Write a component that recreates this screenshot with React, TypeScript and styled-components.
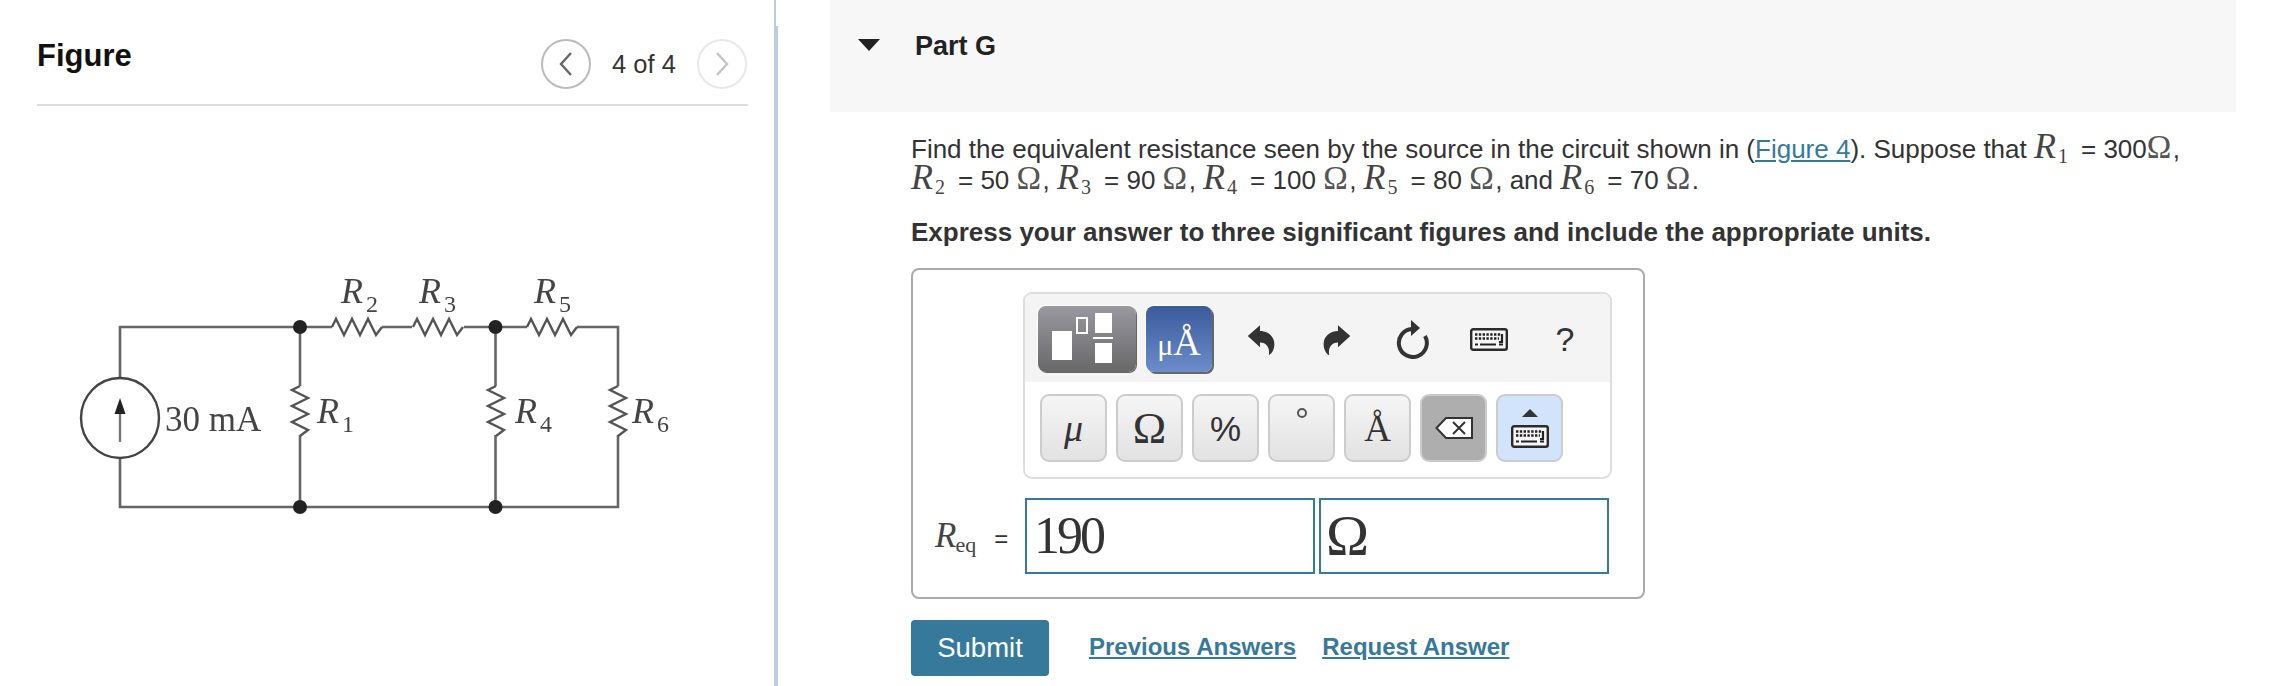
import React, { ReactElement } from 'react'
import styled, { createGlobalStyle } from 'styled-components'

const SANS = '"Liberation Sans", Arial, sans-serif'
const SERIF = '"Liberation Serif", "Times New Roman", serif'
const TEAL = '#37799b'
const INK = '#333'

const GlobalStyle = createGlobalStyle`
  html, body {
    margin: 0;
    padding: 0;
    background: #fff;
    font-family: ${SANS};
    color: ${INK};
  }
`

const Page = styled.div`
  display: flex;
  width: 2292px;
  height: 686px;
  overflow: hidden;
`

const FigurePanel = styled.aside`
  position: relative;
  box-sizing: border-box;
  flex: none;
  width: 778px;
  padding: 0 26px 0 37px;
  border-right: 4px solid #bccddd;
  &::before {
    content: '';
    position: absolute;
    top: 0;
    right: -4px;
    width: 2px;
    height: 26px;
    background: #fff;
  }
`

const FigureHeader = styled.header`
  display: flex;
  align-items: flex-start;
  justify-content: space-between;
  height: 104px;
  border-bottom: 2px solid #ddd;
`

const FigureTitle = styled.h2`
  margin: 37px 0 0;
  font-size: 31px;
  line-height: 38px;
  font-weight: 700;
  color: #111;
`

const Pager = styled.div`
  display: flex;
  align-items: center;
  margin: 39px 1px 0 0;
`

const PagerText = styled.span`
  width: 106px;
  text-align: center;
  font-size: 25.5px;
  line-height: 50px;
  color: ${INK};
`

const PagerButton = styled.button<{ $off?: boolean }>`
  display: flex;
  align-items: center;
  justify-content: center;
  box-sizing: border-box;
  width: 50px;
  height: 50px;
  padding: 0;
  background: #fff;
  border-radius: 50%;
  border: 2px solid ${(p) => (p.$off ? '#e8e8e8' : '#bbb')};
  color: ${(p) => (p.$off ? '#c4c4c4' : '#666')};
`

const CircuitSvg = styled.svg`
  display: block;
  width: 711px;
  height: 280px;
  margin-top: 154px;
  filter: blur(0.45px);
`

const QuestionPanel = styled.main`
  flex: 1;
  padding-left: 52px;
`

const PartHeader = styled.header`
  display: flex;
  align-items: flex-start;
  box-sizing: border-box;
  width: 1406px;
  height: 112px;
  padding: 30px 0 0 28px;
  background: #f7f7f7;
`

const Caret = styled.span`
  width: 0;
  height: 0;
  margin: 9px 35px 0 0;
  border-left: 11px solid transparent;
  border-right: 11px solid transparent;
  border-top: 12px solid #222;
`

const PartTitle = styled.h3`
  margin: 0;
  font-size: 27px;
  line-height: 32px;
  font-weight: 700;
  color: #222;
`

const Body = styled.div`
  padding-left: 81px;
`

const Prompt = styled.p`
  margin: 22px 0 0;
  width: 1290px;
  font-size: 26px;
  line-height: 31px;
  color: ${INK};
  white-space: nowrap;
`

const FigureLink = styled.a`
  color: ${TEAL};
  text-decoration: underline;
`

const Instruction = styled.p`
  margin: 21px 0 0;
  font-size: 26px;
  line-height: 31px;
  font-weight: 700;
  color: ${INK};
`

const MathVar = styled.span`
  font-family: ${SERIF};
  font-style: italic;
  font-size: 36px;
  line-height: 0;
  letter-spacing: 2px;
  color: #444;
`

const MathSub = styled.sub`
  font-family: ${SERIF};
  font-size: 20px;
  line-height: 0;
  vertical-align: -5px;
  margin-right: 13px;
  color: #444;
`

const MathOhm = styled.span`
  font-family: ${SERIF};
  font-size: 33px;
  line-height: 0;
  margin-right: 1.5px;
  color: #555;
`

const AnswerBox = styled.div`
  box-sizing: border-box;
  width: 734px;
  height: 331px;
  margin-top: 20px;
  padding-top: 22px;
  border: 2px solid #aaa;
  border-radius: 8px;
`

const Toolbar = styled.div`
  box-sizing: border-box;
  width: 589px;
  height: 187px;
  margin-left: 110px;
  border: 2px solid #ddd;
  border-radius: 9px;
  overflow: hidden;
`

const TemplateRow = styled.div`
  display: flex;
  align-items: flex-start;
  box-sizing: border-box;
  height: 88px;
  padding: 12px 0 0 13px;
  background: #f4f4f4;
`

const GrayTab = styled.div`
  display: flex;
  align-items: center;
  justify-content: center;
  box-sizing: border-box;
  width: 98px;
  height: 66px;
  border-radius: 8px;
  background: linear-gradient(#9a98a0, #686868);
  box-shadow: -1px -1px 0 #fff, 1px 1px 0 #666;
`

const BlueTab = styled.div`
  display: flex;
  align-items: baseline;
  justify-content: center;
  box-sizing: border-box;
  width: 66px;
  height: 66px;
  margin-left: 10px;
  border-radius: 8px;
  background: linear-gradient(#3b5a9b, #6c8ccb);
  box-shadow: -1px -1px 0 #fff, 2px 2px 0 #666;
  font-family: ${SERIF};
  font-size: 38px;
  line-height: 72px;
  color: #fff;
`

const MicroGlyph = styled.span`
  font-size: 30px;
`

const ToolSlots = styled.div`
  display: flex;
  align-items: center;
  height: 66px;
  margin-left: 11px;
`

const ToolSlot = styled.div<{ $mirror?: boolean }>`
  display: flex;
  align-items: center;
  justify-content: center;
  width: 76px;
  font-size: 34px;
  color: ${INK};
  transform: ${(p) => (p.$mirror ? 'scaleX(-1)' : 'none')};
`

const KeyRow = styled.div`
  display: flex;
  gap: 9px;
  padding: 12px 0 0 15px;
  background: #fff;
`

const KeyButton = styled.button<{ $tone?: 'plain' | 'dark' | 'light'; $italic?: boolean; $sans?: boolean; $size?: number }>`
  display: flex;
  flex-direction: column;
  align-items: center;
  justify-content: center;
  gap: 8px;
  box-sizing: border-box;
  width: 67px;
  height: 68px;
  padding: 0;
  border: 2px solid #ccc;
  border-radius: 9px;
  background: ${(p) =>
    p.$tone === 'dark'
      ? '#aeaeae'
      : p.$tone === 'light'
        ? '#d2e3fc'
        : 'linear-gradient(#f5f5f5, #e2e2e2)'};
  font-family: ${(p) => (p.$sans ? SANS : SERIF)};
  font-style: ${(p) => (p.$italic ? 'italic' : 'normal')};
  font-size: ${(p) => p.$size ?? 38}px;
  line-height: 1;
  color: ${INK};
`

const DegreeRing = styled.span`
  box-sizing: border-box;
  align-self: center;
  width: 10px;
  height: 10px;
  margin-bottom: 30px;
  border: 2px solid #555;
  border-radius: 50%;
`

const KeyCaret = styled.span`
  width: 0;
  height: 0;
  border-left: 8px solid transparent;
  border-right: 8px solid transparent;
  border-bottom: 8px solid #333;
`

const InputRow = styled.div`
  display: flex;
  align-items: center;
  margin-top: 19px;
  padding-left: 22px;
`

const InputLabel = styled.div`
  width: 90px;
  font-size: 24px;
  color: ${INK};
  white-space: nowrap;
`

const EqVar = styled.span`
  font-family: ${SERIF};
  font-style: italic;
  font-size: 35px;
  color: #444;
`

const EqSub = styled.span`
  font-family: ${SERIF};
  font-size: 22px;
  position: relative;
  top: 5px;
  left: -1px;
  margin-right: 17px;
  color: #444;
`

const AnswerField = styled.div<{ $unit?: boolean }>`
  box-sizing: border-box;
  width: 290px;
  height: 76px;
  margin-left: ${(p) => (p.$unit ? '4px' : '0')};
  padding-left: ${(p) => (p.$unit ? '5px' : '7px')};
  border: 2px solid ${TEAL};
  font-family: ${SERIF};
  font-size: ${(p) => (p.$unit ? '58px' : '52px')};
  letter-spacing: ${(p) => (p.$unit ? '0' : '-3px')};
  line-height: 72px;
  color: ${INK};
`

const ActionRow = styled.div`
  display: flex;
  align-items: center;
  margin-top: 21px;
`

const SubmitButton = styled.button`
  width: 138px;
  height: 56px;
  padding: 0;
  border: none;
  border-radius: 4px;
  background: ${TEAL};
  color: #fff;
  font-family: ${SANS};
  font-size: 27.5px;
`

const ActionLink = styled.a`
  margin-left: 26px;
  margin-bottom: 2px;
  font-size: 24px;
  font-weight: 700;
  color: ${TEAL};
  text-decoration: underline;
  &:first-of-type {
    margin-left: 40px;
  }
`

const Zig = ({ x, y, vertical }: { x: number; y: number; vertical?: boolean }): ReactElement => {
  // one resistor, 50px long, starting at x,y
  const pts = [0, 4, 12, 20, 28, 36, 44, 50].map((d, i) => {
    const off = i === 0 || i === 7 ? 0 : i % 2 ? -8 : 8
    return vertical ? `${x + off},${y + d}` : `${x + d},${y + off}`
  })
  return <polyline points={pts.join(' ')} fill="none" stroke="#555" strokeWidth="2.4" />
}

const Label = ({ x, y, n }: { x: number; y: number; n: string }): ReactElement => (
  <text x={x} y={y} fontFamily={SERIF} fill="#444">
    <tspan fontStyle="italic" fontSize="36">R</tspan>
    <tspan fontSize="24" dx="3" dy="9">{n}</tspan>
  </text>
)

const Circuit = (): ReactElement => (
  <CircuitSvg viewBox="37 260 711 280">
    <path
      d="M120 378V327H332M382 327H412M464 327H527M577 327H618V386M618 435V507H120V458M300 327V386M300 435V507M495.500 327V386M495.500 435V507"
      fill="none"
      stroke="#666"
      strokeWidth="2.6"
    />
    <Zig x={332} y={327} />
    <Zig x={413} y={327} />
    <Zig x={527} y={327} />
    <Zig x={300} y={386} vertical />
    <Zig x={496} y={386} vertical />
    <Zig x={618} y={386} vertical />
    <circle cx="300" cy="327" r="7" fill="#222" />
    <circle cx="495.500" cy="327" r="7" fill="#222" />
    <circle cx="300" cy="507" r="7" fill="#222" />
    <circle cx="495.500" cy="507" r="7" fill="#222" />
    <ellipse cx="120" cy="418" rx="39" ry="40" fill="#fff" stroke="#444" strokeWidth="2.4" />
    <path d="M120 442V412" stroke="#777" strokeWidth="2.4" />
    <path d="M120 398L125.500 414H114.500Z" fill="#222" />
    <text x="165" y="431" fontFamily={SERIF} fontSize="35" fill="#444">30 mA</text>
    <Label x={341} y={303} n="2" />
    <Label x={419} y={303} n="3" />
    <Label x={534} y={303} n="5" />
    <Label x={317} y={423} n="1" />
    <Label x={515} y={423} n="4" />
    <Label x={632} y={423} n="6" />
  </CircuitSvg>
)

const Chevron = ({ flip }: { flip?: boolean }): ReactElement => (
  <svg width="14" height="26" viewBox="0 0 14 26">
    <path d={flip ? 'M2 2L12 13L2 24' : 'M12 2L2 13L12 24'} fill="none" stroke="currentColor" strokeWidth="2.4" />
  </svg>
)

const TemplateIcon = (): ReactElement => (
  <svg width="98" height="66" viewBox="1038 305 98 66">
    <rect x="1052" y="330" width="20" height="29" fill="#fff" />
    <rect x="1077" y="317" width="10" height="15" fill="none" stroke="#fff" strokeWidth="2" />
    <rect x="1095" y="312" width="17" height="20" fill="#fff" />
    <rect x="1093" y="336" width="20" height="2" fill="#fff" />
    <rect x="1095" y="342" width="17" height="20" fill="#fff" />
  </svg>
)

const ArrowIcon = (): ReactElement => (
  <svg width="30" height="33" viewBox="0 0 92 102">
    <path d="M5 40L43 7V25C70 25 90 45 87 70C86 85 78 95 70 100C74 80 66 60 43 60V75Z" fill="#333" />
  </svg>
)

const ResetIcon = (): ReactElement => (
  <svg width="36" height="40" viewBox="0 0 36 40">
    <path d="M17 10A14 14 0 1 0 30 17" fill="none" stroke="#333" strokeWidth="4" />
    <path d="M16 1L25 9L16 17Z" fill="#333" />
  </svg>
)

const KeyboardIcon = (): ReactElement => (
  <svg width="38" height="23" viewBox="0 0 38 23">
    <rect x="1.200" y="1.200" width="35.600" height="20.600" rx="2" fill="#f6f6f6" stroke="#2a2a2a" strokeWidth="2.400" />
    <path d="M5 6.500H31M5 10.500H29" stroke="#222" strokeWidth="2.600" strokeDasharray="2.400 1.400" />
    <path d="M32 6V14H29M5 16.500H8M10 16.500H26M29 16.500H33" stroke="#222" strokeWidth="2.200" fill="none" />
  </svg>
)

const BackspaceIcon = (): ReactElement => (
  <svg width="38" height="22" viewBox="0 0 38 22">
    <path d="M1.500 11L11 1H37V21H11Z" fill="#fff" stroke="#333" strokeWidth="2" />
    <path d="M18 5L30 17M30 5L18 17" stroke="#333" strokeWidth="2" />
  </svg>
)

const Rn = ({ n }: { n: string }): ReactElement => (
  <>
    <MathVar>R</MathVar>
    <MathSub>{n}</MathSub>
  </>
)

const App = (): ReactElement => {
  return (
    <Page>
      <GlobalStyle />
      <FigurePanel>
        <FigureHeader>
          <FigureTitle>Figure</FigureTitle>
          <Pager>
            <PagerButton>
              <Chevron />
            </PagerButton>
            <PagerText>4 of 4</PagerText>
            <PagerButton $off>
              <Chevron flip />
            </PagerButton>
          </Pager>
        </FigureHeader>
        <Circuit />
      </FigurePanel>
      <QuestionPanel>
        <PartHeader>
          <Caret />
          <PartTitle>Part G</PartTitle>
        </PartHeader>
        <Body>
          <Prompt>
            Find the equivalent resistance seen by the source in the circuit shown in (
            <FigureLink>Figure 4</FigureLink>). Suppose that <Rn n="1" />= 300<MathOhm>Ω</MathOhm>,
            <br />
            <Rn n="2" />= 50 <MathOhm>Ω</MathOhm>, <Rn n="3" />= 90 <MathOhm>Ω</MathOhm>, <Rn n="4" />= 100{' '}
            <MathOhm>Ω</MathOhm>, <Rn n="5" />= 80 <MathOhm>Ω</MathOhm>, and <Rn n="6" />= 70{' '}
            <MathOhm>Ω</MathOhm>.
          </Prompt>
          <Instruction>Express your answer to three significant figures and include the appropriate units.</Instruction>
          <AnswerBox>
            <Toolbar>
              <TemplateRow>
                <GrayTab>
                  <TemplateIcon />
                </GrayTab>
                <BlueTab>
                  <MicroGlyph>μ</MicroGlyph>Å
                </BlueTab>
                <ToolSlots>
                  <ToolSlot>
                    <ArrowIcon />
                  </ToolSlot>
                  <ToolSlot $mirror>
                    <ArrowIcon />
                  </ToolSlot>
                  <ToolSlot>
                    <ResetIcon />
                  </ToolSlot>
                  <ToolSlot>
                    <KeyboardIcon />
                  </ToolSlot>
                  <ToolSlot>?</ToolSlot>
                </ToolSlots>
              </TemplateRow>
              <KeyRow>
                <KeyButton $italic>μ</KeyButton>
                <KeyButton $size={45}>Ω</KeyButton>
                <KeyButton $sans $size={35}>%</KeyButton>
                <KeyButton>
                  <DegreeRing />
                </KeyButton>
                <KeyButton $size={37}>Å</KeyButton>
                <KeyButton $tone="dark">
                  <BackspaceIcon />
                </KeyButton>
                <KeyButton $tone="light">
                  <KeyCaret />
                  <KeyboardIcon />
                </KeyButton>
              </KeyRow>
            </Toolbar>
            <InputRow>
              <InputLabel>
                <EqVar>R</EqVar>
                <EqSub>eq</EqSub>=
              </InputLabel>
              <AnswerField>190</AnswerField>
              <AnswerField $unit>Ω</AnswerField>
            </InputRow>
          </AnswerBox>
          <ActionRow>
            <SubmitButton>Submit</SubmitButton>
            <ActionLink>Previous Answers</ActionLink>
            <ActionLink>Request Answer</ActionLink>
          </ActionRow>
        </Body>
      </QuestionPanel>
    </Page>
  )
}

export default App
